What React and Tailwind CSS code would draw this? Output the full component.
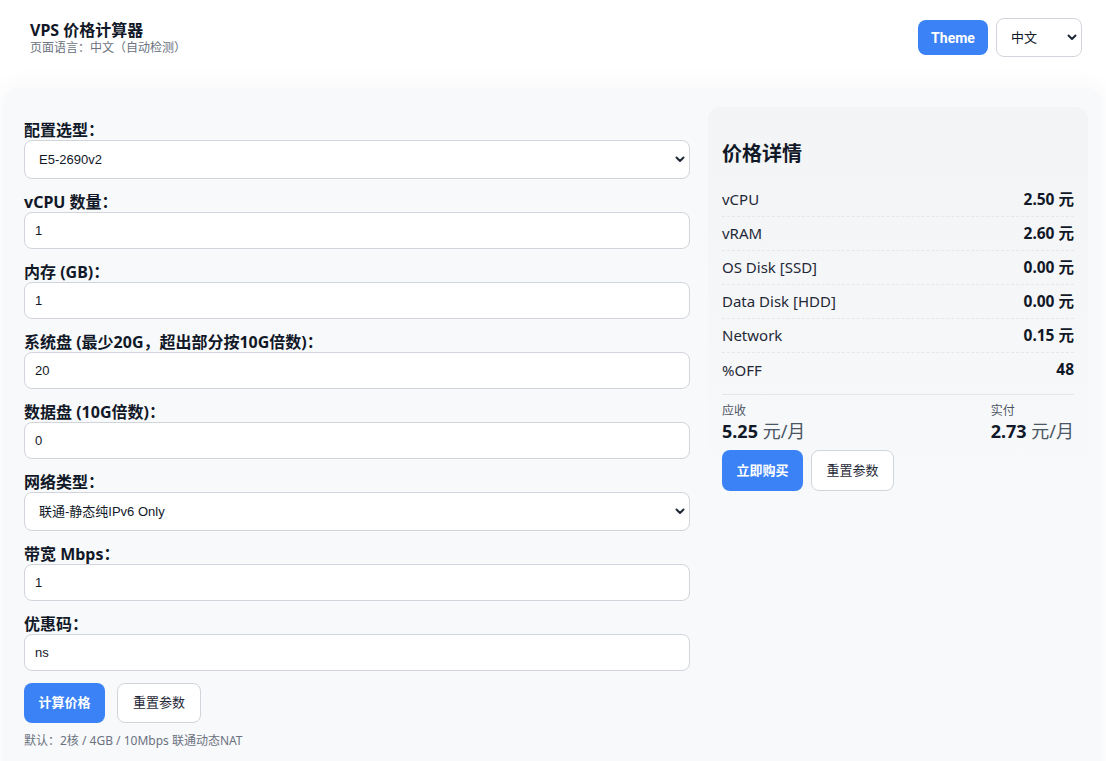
import React, { useState } from "react";

/* ─── Chevron used on the custom selects ───────────────────────── */
function Chevron({ className = "" }) {
  return (
    <svg width="12" height="12" viewBox="0 0 24 24" fill="none" stroke="currentColor" strokeWidth="4" strokeLinecap="round" strokeLinejoin="round" className={className}>
      <polyline points="5 9 12 16 19 9" />
    </svg>
  );
}

const inputCls =
  "w-full h-[37px] bg-white border border-[#d1d5db] rounded-lg px-[10px] text-[13px] text-[#111827] outline-none font-['Liberation_Sans','Noto_Sans_CJK_SC',sans-serif]";

function SelectBox({ value, options, onChange }) {
  return (
    <div className="relative">
      <select
        value={value}
        onChange={e => onChange(e.target.value)}
        className="w-full h-[39px] appearance-none bg-white border border-[#d1d5db] rounded-lg pl-[14px] pr-8 text-[13px] text-[#111827] outline-none font-['Liberation_Sans','Noto_Sans_CJK_SC',sans-serif]"
      >
        {options.map(o => (
          <option key={o}>{o}</option>
        ))}
      </select>
      <Chevron className="absolute right-[4px] top-[13px] text-[#1f2937] pointer-events-none" />
    </div>
  );
}

function Field({ label, children }) {
  return (
    <div className="flex flex-col">
      <label className="mt-[13px] leading-5 text-base font-bold text-[#111827]">{label}</label>
      {children}
    </div>
  );
}

/* ─── Price row ───────────────────────────────────────────────── */
function PriceRow({ name, value, last }) {
  return (
    <div className={`h-[34px] flex items-center justify-between text-[15px] ${last ? "" : "border-b border-dashed border-[#e5e7eb]"}`}>
      <span className="text-[#1f2937]">{name}</span>
      <span className="font-bold text-[15.5px] text-[#111827]">{value}</span>
    </div>
  );
}

export default function App() {
  const [form, setForm] = useState({
    model: "E5-2690v2",
    cpu: "1",
    ram: "1",
    os: "20",
    data: "0",
    net: "联通-静态纯IPv6 Only",
    bw: "1",
    code: "ns",
  });
  const set = k => v => setForm(f => ({ ...f, [k]: v }));

  const rows = [
    ["vCPU", "2.50 元"],
    ["vRAM", "2.60 元"],
    ["OS Disk [SSD]", "0.00 元"],
    ["Data Disk [HDD]", "0.00 元"],
    ["Network", "0.15 元"],
    ["%OFF", "48"],
  ];

  return (
    <div className="min-h-screen bg-white font-['Noto_Sans','Noto_Sans_CJK_SC',sans-serif] text-[#111827] overflow-hidden">
      {/* Header */}
      <header className="h-[88px] flex items-start justify-between pl-[30px] pr-[24px] pt-[18px]">
        <div className="mt-[2px]">
          <h1 className="text-base leading-5 font-bold">VPS 价格计算器</h1>
          <p className="text-xs leading-4 text-[#6b7280]">页面语言：中文（自动检测）</p>
        </div>
        <div className="flex items-center gap-2">
          <button className="h-[35px] w-[70px] rounded-lg bg-[#3b82f6] text-white text-sm font-bold font-['Roboto','Liberation_Sans',sans-serif]">
            Theme
          </button>
          <div className="relative">
            <select className="h-[39px] w-[86px] appearance-none bg-white border border-[#d1d5db] rounded-lg pl-[14px] text-[13px] outline-none">
              <option>中文</option>
              <option>English</option>
            </select>
            <Chevron className="absolute right-[4px] top-[13px] text-[#1f2937] pointer-events-none" />
          </div>
        </div>
      </header>

      {/* Main panel */}
      <main className="mx-[3px] rounded-2xl bg-[#f8f9fb] shadow-[0_-4px_24px_rgba(0,0,0,0.035)] pt-[19px] pb-10 pl-[21px]">
        <div className="grid grid-cols-[666px_380px] gap-[18px] items-start">
          {/* Form */}
          <div className="flex flex-col">
            <Field label="配置选型：">
              <SelectBox value={form.model} options={["E5-2690v2", "E5-2680v4", "EPYC 7763"]} onChange={set("model")} />
            </Field>
            <Field label="vCPU 数量：">
              <input className={inputCls} value={form.cpu} onChange={e => set("cpu")(e.target.value)} />
            </Field>
            <Field label="内存 (GB)：">
              <input className={inputCls} value={form.ram} onChange={e => set("ram")(e.target.value)} />
            </Field>
            <Field label="系统盘 (最少20G，超出部分按10G倍数)：">
              <input className={inputCls} value={form.os} onChange={e => set("os")(e.target.value)} />
            </Field>
            <Field label="数据盘 (10G倍数)：">
              <input className={inputCls} value={form.data} onChange={e => set("data")(e.target.value)} />
            </Field>
            <Field label="网络类型：">
              <SelectBox value={form.net} options={["联通-静态纯IPv6 Only", "联通动态NAT", "电信静态IPv4"]} onChange={set("net")} />
            </Field>
            <Field label="带宽 Mbps：">
              <input className={inputCls} value={form.bw} onChange={e => set("bw")(e.target.value)} />
            </Field>
            <Field label="优惠码：">
              <input className={inputCls} value={form.code} onChange={e => set("code")(e.target.value)} />
            </Field>

            <div className="mt-3 flex items-center gap-3">
              <button className="h-10 w-[81px] rounded-lg bg-[#3b82f6] text-white text-[13px] font-bold">计算价格</button>
              <button className="h-10 w-[84px] rounded-lg bg-white border border-[#d1d5db] text-[13px] text-[#1f2937]">重置参数</button>
            </div>
            <p className="mt-[10px] text-xs leading-4 text-[#6b7280]">默认：2核 / 4GB / 10Mbps 联通动态NAT</p>
          </div>

          {/* Price details */}
          <div className="rounded-xl bg-linear-to-b from-[#f3f4f6] to-[#f8f9fb] pt-[33px] pb-[14px] px-[14px]">
            <h3 className="text-xl leading-7 font-bold mb-[15px]">价格详情</h3>
            {rows.map(([n, v], i) => (
              <PriceRow key={n} name={n} value={v} last={i === rows.length - 1} />
            ))}
            <div className="mt-[7px] border-t border-[#e5e7eb] pt-[8px] flex justify-between">
              <div>
                <div className="text-xs leading-4 text-[#4b5563]">应收</div>
                <div className="text-lg leading-6">
                  <span className="font-bold">5.25</span> <span className="text-[#4b5563]">元/月</span>
                </div>
              </div>
              <div>
                <div className="text-xs leading-4 text-[#4b5563]">实付</div>
                <div className="text-lg leading-6">
                  <span className="font-bold">2.73</span> <span className="text-[#4b5563]">元/月</span>
                </div>
              </div>
            </div>
            <div className="mt-[7px] flex items-center gap-2">
              <button className="h-[41px] w-[81px] rounded-lg bg-[#3b82f6] text-white text-[13px] font-bold">立即购买</button>
              <button className="h-[41px] w-[83px] rounded-lg bg-white border border-[#d1d5db] text-[13px] text-[#1f2937]">重置参数</button>
            </div>
          </div>
        </div>
      </main>
    </div>
  );
}
